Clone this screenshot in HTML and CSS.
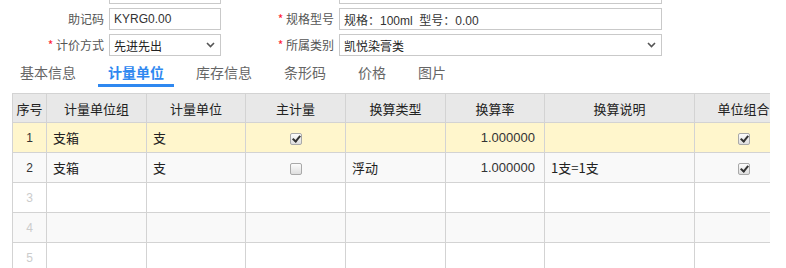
FILE: index.html
```html
<!DOCTYPE html>
<html lang="zh-CN">
<head>
    <meta charset="UTF-8">
    <title>计量单位</title>
    <link rel="stylesheet" href="styles.css">
</head>
<body>
    <!-- 基本表单 -->
    <div class="form-grid">
        <label class="lbl"></label>
        <input class="ipt" type="text" value="">
        <label class="lbl"></label>
        <input class="ipt" type="text" value="">

        <label class="lbl">助记码</label>
        <input class="ipt" type="text" value="KYRG0.00">
        <label class="lbl"><i>*</i> 规格型号</label>
        <input class="ipt" type="text" value="规格：100ml  型号：0.00">

        <label class="lbl"><i>*</i> 计价方式</label>
        <div class="sel">先进先出<span class="arrow"><svg width="9" height="6" viewBox="0 0 9 6"><path d="M1 1l3.5 3.5L8 1" fill="none" stroke="#555" stroke-width="1.6"/></svg></span></div>
        <label class="lbl"><i>*</i> 所属类别</label>
        <div class="sel">凯悦染膏类<span class="arrow"><svg width="9" height="6" viewBox="0 0 9 6"><path d="M1 1l3.5 3.5L8 1" fill="none" stroke="#555" stroke-width="1.6"/></svg></span></div>
    </div>

    <!-- 标签页 -->
    <ul class="tabs">
        <li>基本信息</li>
        <li class="active">计量单位</li>
        <li>库存信息</li>
        <li>条形码</li>
        <li>价格</li>
        <li>图片</li>
    </ul>

    <!-- 计量单位表格 -->
    <div class="grid-wrap">
        <table class="grid">
            <colgroup>
                <col style="width:34px"><col style="width:100px"><col style="width:99px"><col style="width:100px">
                <col style="width:100px"><col style="width:99px"><col style="width:150px"><col style="width:98px">
            </colgroup>
            <thead>
                <tr><th>序号</th><th>计量单位组</th><th>计量单位</th><th>主计量</th><th>换算类型</th><th>换算率</th><th>换算说明</th><th>单位组合</th></tr>
            </thead>
            <tbody>
                <tr class="selected">
                    <td class="no">1</td><td>支箱</td><td>支</td>
                    <td class="c"><span class="chk on"></span></td>
                    <td></td><td class="num">1.000000</td><td></td>
                    <td class="c"><span class="chk on"></span></td>
                </tr>
                <tr>
                    <td class="no">2</td><td>支箱</td><td>支</td>
                    <td class="c"><span class="chk"></span></td>
                    <td>浮动</td><td class="num">1.000000</td><td>1支=1支</td>
                    <td class="c"><span class="chk on"></span></td>
                </tr>
                <tr class="empty"><td class="no">3</td><td></td><td></td><td></td><td></td><td></td><td></td><td></td></tr>
                <tr class="empty"><td class="no">4</td><td></td><td></td><td></td><td></td><td></td><td></td><td></td></tr>
                <tr class="empty"><td class="no">5</td><td></td><td></td><td></td><td></td><td></td><td></td><td></td></tr>
            </tbody>
        </table>
    </div>
</body>
</html>
```

FILE: styles.css
```css
body {
    margin: 0;
    background: #fff;
    font-family: "Microsoft YaHei", "Noto Sans CJK SC", Arial, sans-serif;
    font-size: 12px;
    color: #333;
    overflow: hidden;
}

/* 表单 */
.form-grid {
    display: grid;
    grid-template-columns: 104px 112px 108px 323px;
    grid-auto-rows: 22px;
    column-gap: 5px;
    row-gap: 4px;
    margin-top: -18px;
}

.lbl {
    text-align: right;
    line-height: 22px;
    color: #555;
}

.lbl i {
    font-style: normal;
    color: #f23;
}

.ipt, .sel {
    box-sizing: border-box;
    height: 22px;
    border: 1px solid #c9c9c9;
    padding: 0 4px;
    font-family: Arial, "Noto Sans CJK SC", sans-serif;
    font-size: 12px;
    color: #333;
    outline: none;
}

.sel {
    position: relative;
    line-height: 21px;
    font-family: "Noto Sans CJK SC", sans-serif;
    color: #222;
}

.sel .arrow {
    position: absolute;
    right: 5px;
    top: 7px;
    line-height: 0;
}

/* 标签页 */
.tabs {
    list-style: none;
    display: flex;
    gap: 12px;
    margin: 4px 0 0 10px;
    padding: 0;
}

.tabs li {
    padding: 0 10px;
    line-height: 24px;
    font-size: 14px;
    color: #666;
    border-bottom: 3px solid transparent;
}

.tabs li.active {
    color: #2f88f0;
    font-weight: bold;
    border-bottom-color: #2f88f0;
}

/* 表格 */
.grid-wrap {
    margin: 6px 0 0 12px;
    width: 758px;
    overflow: hidden;
}

.grid {
    border-collapse: collapse;
    table-layout: fixed;
    width: 780px;
}

.grid th, .grid td {
    border: 1px solid #d3d3d3;
    padding: 0 6px;
    white-space: nowrap;
    overflow: hidden;
}

.grid th {
    height: 28px;
    background: #e8e8e8;
    font-size: 13px;
    font-weight: normal;
    color: #222;
    text-align: center;
    padding: 0;
}

.grid td {
    height: 29px;
    font-size: 13px;
    color: #222;
}

.grid tbody tr:nth-child(even) td {
    background: #f9f9f9;
}

.grid tbody tr.selected td {
    background: #fff6cc;
}

.grid td.no {
    text-align: center;
    padding: 0;
    font-family: Arial, sans-serif;
    font-size: 12px;
    color: #333;
}

.grid tr.empty td.no {
    color: #ccc;
}

.grid td.num {
    text-align: right;
    padding-right: 9px;
    font-family: Arial, sans-serif;
    color: #333;
}

.grid td.c {
    text-align: center;
    padding: 0;
}

/* 复选框 */
.chk {
    display: inline-block;
    box-sizing: border-box;
    width: 12px;
    height: 12px;
    border: 1px solid #a9a9a9;
    border-radius: 2px;
    background: linear-gradient(#fcfcfc, #dedede);
    vertical-align: middle;
    position: relative;
}

.chk.on::after {
    content: "";
    position: absolute;
    left: 3px;
    top: 0px;
    width: 3px;
    height: 6px;
    border: solid #333;
    border-width: 0 2px 2px 0;
    transform: rotate(40deg);
}
```
